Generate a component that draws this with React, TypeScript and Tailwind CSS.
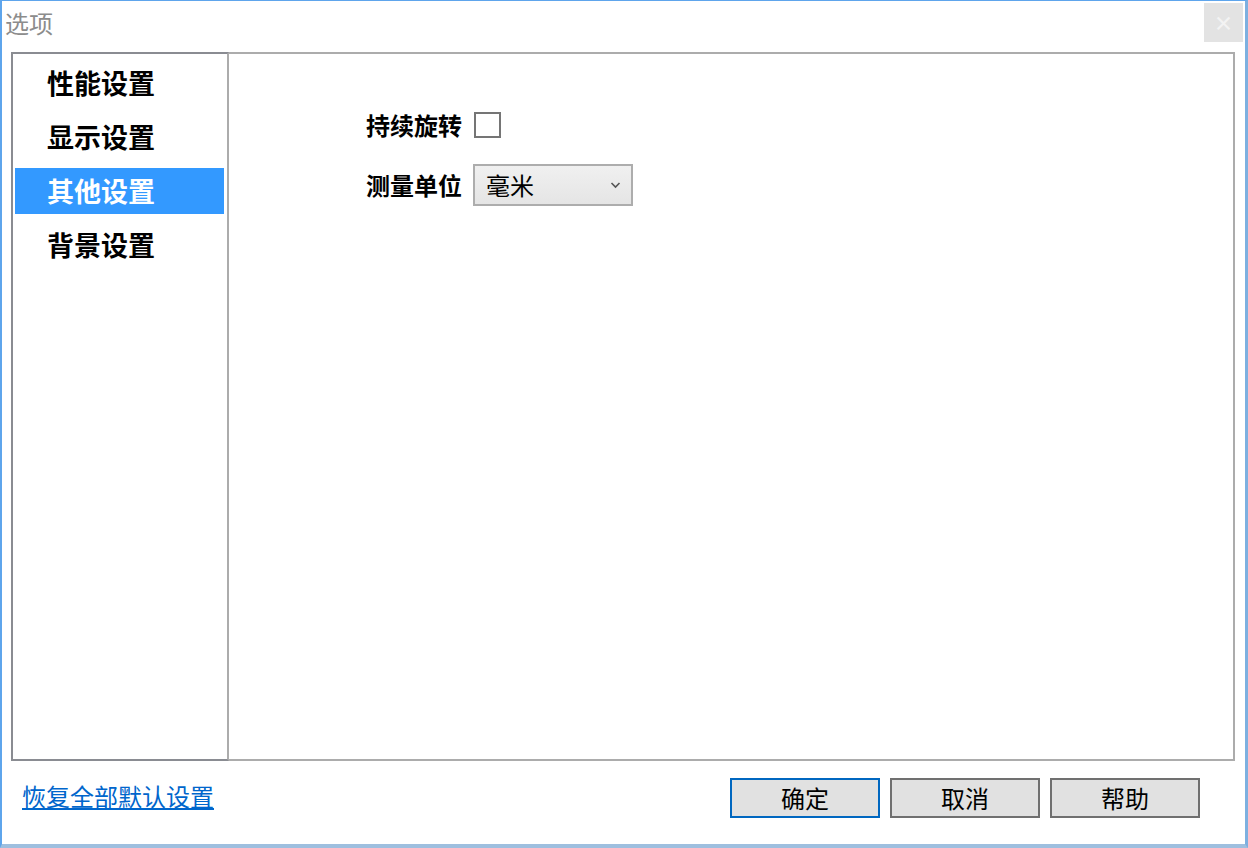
const cjk = { fontFamily: '"Noto Sans CJK SC", "Microsoft YaHei", sans-serif' };

const navItems = ['性能设置', '显示设置', '其他设置', '背景设置'];

const App = () => {
  const active = 2;

  return (
    <div
      style={cjk}
      className="w-[1248px] h-[848px] flex flex-col bg-white border-t border-l-2 border-r-[3px] border-b-4 border-t-[#5ea5ec] border-l-[#5ea5ec] border-r-[#7db0e0] border-b-[#9ebfdf]"
    >
      <div className="h-[51px] flex items-start justify-between">
        <div className="pl-[3px] pt-[6px] text-[24px] leading-[32px] text-[#8c8c8c]">选项</div>
        <div className="mt-[2px] mr-[2px] w-[39px] h-[39px] bg-[#e3e3e3] flex items-center justify-center text-[#f3f3f3] text-[20px] font-bold">
          ×
        </div>
      </div>

      <div className="flex ml-[9px] mr-[10px] h-[709px]">
        <div className="w-[218px] flex flex-col gap-2 pt-[6px] border-l-2 border-t-2 border-b-2 border-[#8a8c92] border-r-2 border-r-[#acacac]">
          {navItems.map((item, i) => (
            <div
              key={item}
              className={
                i === active
                  ? 'ml-[2px] mr-[3px] h-[46px] flex items-center pl-[32px] bg-[#3399ff] text-white text-[27px] font-bold'
                  : 'ml-[2px] mr-[3px] h-[46px] flex items-center pl-[32px] text-black text-[27px] font-bold'
              }
            >
              {item}
            </div>
          ))}
        </div>

        <div className="flex-1 border-t-2 border-r-2 border-b-2 border-[#acacac] pl-[137px] pt-[58px] flex flex-col gap-[26px]">
          <div className="flex items-center h-[26px]">
            <span className="text-[24px] font-bold text-black leading-none">持续旋转</span>
            <span className="ml-[12px] w-[27px] h-[26px] border-2 border-[#757575] bg-white" />
          </div>
          <div className="flex items-center h-[42px]">
            <span className="text-[24px] font-bold text-black leading-none">测量单位</span>
            <div className="ml-[11px] w-[160px] h-[42px] border-2 border-[#adadad] bg-gradient-to-b from-[#f0f0f0] to-[#e5e5e5] flex items-center justify-between pl-[11px] pr-[10px]">
              <span className="text-[24px] text-black">毫米</span>
              <svg width="11" height="8" viewBox="0 0 11 8" fill="none">
                <path d="M1.5 2 L5.5 6 L9.5 2" stroke="#555" strokeWidth="1.6" />
              </svg>
            </div>
          </div>
        </div>
      </div>

      <div className="flex-1 flex items-start justify-between pt-[17px] pl-[20px] pr-[45px]">
        <a className="text-[24px] text-[#0066cc] underline underline-offset-2 cursor-pointer">恢复全部默认设置</a>
        <div className="flex gap-[10px]">
          <button className="w-[150px] h-[40px] bg-[#e1e1e1] border-2 border-[#0067c0] text-[24px] text-black">确定</button>
          <button className="w-[150px] h-[40px] bg-[#e1e1e1] border-2 border-[#707070] text-[24px] text-black">取消</button>
          <button className="w-[150px] h-[40px] bg-[#e1e1e1] border-2 border-[#707070] text-[24px] text-black">帮助</button>
        </div>
      </div>
    </div>
  );
};

export default App;
